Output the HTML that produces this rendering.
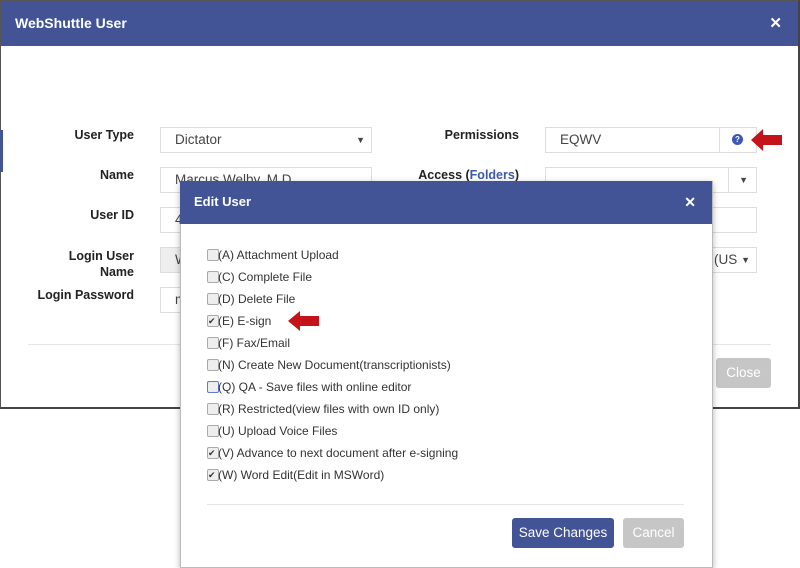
<!DOCTYPE html>
<html><head><style>
body{margin:0;width:800px;height:568px;background:#fff;position:relative;overflow:hidden;font-family:"Liberation Sans",sans-serif;font-size:13px;color:#333}
.a{position:absolute}
.outer{left:0;top:0;width:797px;height:406px;border:1px solid #555;border-right:2px solid #444;border-bottom:2px solid #444;background:#fff}
.hd{background:#425496;color:#fff;font-weight:bold}
.lbl{font-weight:bold;font-size:12.5px;text-align:right;color:#222}
.inp{border:1px solid #ddd;background:#fff;height:26px;box-sizing:border-box;font-size:13.5px;line-height:24px;padding-left:14px;color:#444}
.cb{position:absolute;left:27px;width:10px;height:10px;border:1px solid #aaa;border-radius:2px;background:#eee}
.row{position:absolute;left:38px;font-size:12px;color:#333}
.btn{position:absolute;color:#fff;font-size:13.5px;text-align:center;border-radius:3px}
</style></head><body>
<div class="a outer"></div>
<div class="a hd" style="left:1px;top:1px;width:797px;height:45px;font-size:14px;line-height:45px;padding-left:14px;box-sizing:border-box">WebShuttle User<span style="position:absolute;right:16px;font-size:15px">✕</span></div>
<div class="a" style="left:0;top:130px;width:3px;height:42px;background:#425496"></div>
<div class="a lbl" style="left:40px;top:128px;width:94px">User Type</div>
<div class="a inp" style="left:160px;top:127px;width:212px">Dictator<span style="position:absolute;right:6px;font-size:9px">▼</span></div>
<div class="a lbl" style="left:40px;top:168px;width:94px">Name</div>
<div class="a inp" style="left:160px;top:167px;width:212px">Marcus Welby, M.D.</div>
<div class="a lbl" style="left:40px;top:208px;width:94px">User ID</div>
<div class="a inp" style="left:160px;top:207px;width:212px">4</div>
<div class="a lbl" style="left:40px;top:248px;width:94px;line-height:16px">Login User<br>Name</div>
<div class="a inp" style="left:160px;top:247px;width:212px;background:#eee">W</div>
<div class="a lbl" style="left:20px;top:288px;width:114px">Login Password</div>
<div class="a inp" style="left:160px;top:287px;width:212px">m</div>
<div class="a lbl" style="left:420px;top:128px;width:99px">Permissions</div>
<div class="a inp" style="left:545px;top:127px;width:212px">EQWV</div>
<div class="a" style="left:719px;top:127px;width:1px;height:26px;background:#ddd"></div>
<div class="a" style="left:732px;top:134px;width:11px;height:11px;border-radius:50%;background:#3b58b8;color:#fff;font-size:8px;line-height:11px;text-align:center;font-weight:bold">?</div>
<svg class="a" style="left:750px;top:128px" width="33" height="24"><path d="M1 12 L13 1 L13 7 L32 7 L32 17 L13 17 L13 23 Z" fill="#c4131a"/></svg>
<div class="a lbl" style="left:400px;top:168px;width:119px">Access (<span style="color:#3e5aa8">Folders</span>)</div>
<div class="a inp" style="left:545px;top:167px;width:212px"><span style="position:absolute;right:8px;font-size:9px">▼</span></div>
<div class="a" style="left:728px;top:167px;width:1px;height:26px;background:#ddd"></div>
<div class="a inp" style="left:545px;top:207px;width:212px"></div>
<div class="a inp" style="left:545px;top:247px;width:212px;padding-left:168px">(US<span style="position:absolute;right:6px;font-size:9px">▼</span></div>
<div class="a" style="left:28px;top:344px;width:743px;height:1px;background:#e5e5e5"></div>
<div class="btn" style="left:716px;top:358px;width:55px;height:30px;line-height:30px;background:#c6c6c6">Close</div>

<div class="a" style="left:180px;top:181px;width:531px;height:385px;background:#fff;border:1px solid #bbb;box-shadow:0 2px 6px rgba(0,0,0,.3)"></div>
<div class="a hd" style="left:180px;top:181px;width:532px;height:43px;font-size:13px;line-height:42px;padding-left:14px;box-sizing:border-box">Edit User<span style="position:absolute;right:16px;font-size:14px">✕</span></div>
<div class="a" style="left:180px;top:245px;width:531px">
<div class="cb" style="top:4px"></div><div class="row" style="top:3px">(A) Attachment Upload</div>
<div class="cb" style="top:26px"></div><div class="row" style="top:25px">(C) Complete File</div>
<div class="cb" style="top:48px"></div><div class="row" style="top:47px">(D) Delete File</div>
<div class="cb" style="top:70px;font-size:9px;line-height:10px;color:#333">✔</div><div class="row" style="top:69px">(E) E-sign</div>
<div class="cb" style="top:92px"></div><div class="row" style="top:91px">(F) Fax/Email</div>
<div class="cb" style="top:114px"></div><div class="row" style="top:113px">(N) Create New Document(transcriptionists)</div>
<div class="cb" style="top:136px;border-color:#5b7bd0"></div><div class="row" style="top:135px">(Q) QA - Save files with online editor</div>
<div class="cb" style="top:158px"></div><div class="row" style="top:157px">(R) Restricted(view files with own ID only)</div>
<div class="cb" style="top:180px"></div><div class="row" style="top:179px">(U) Upload Voice Files</div>
<div class="cb" style="top:202px;font-size:9px;line-height:10px;color:#333">✔</div><div class="row" style="top:201px">(V) Advance to next document after e-signing</div>
<div class="cb" style="top:224px;font-size:9px;line-height:10px;color:#333">✔</div><div class="row" style="top:223px">(W) Word Edit(Edit in MSWord)</div>
</div>
<svg class="a" style="left:287px;top:310px" width="33" height="22"><path d="M1 11 L13 1 L13 6 L32 6 L32 16 L13 16 L13 21 Z" fill="#c4131a"/></svg>
<div class="a" style="left:207px;top:504px;width:477px;height:1px;background:#e5e5e5"></div>
<div class="btn" style="left:512px;top:518px;width:102px;height:30px;line-height:30px;background:#425496">Save Changes</div>
<div class="btn" style="left:623px;top:518px;width:61px;height:30px;line-height:30px;background:#c6c6c6">Cancel</div>
</body></html>
